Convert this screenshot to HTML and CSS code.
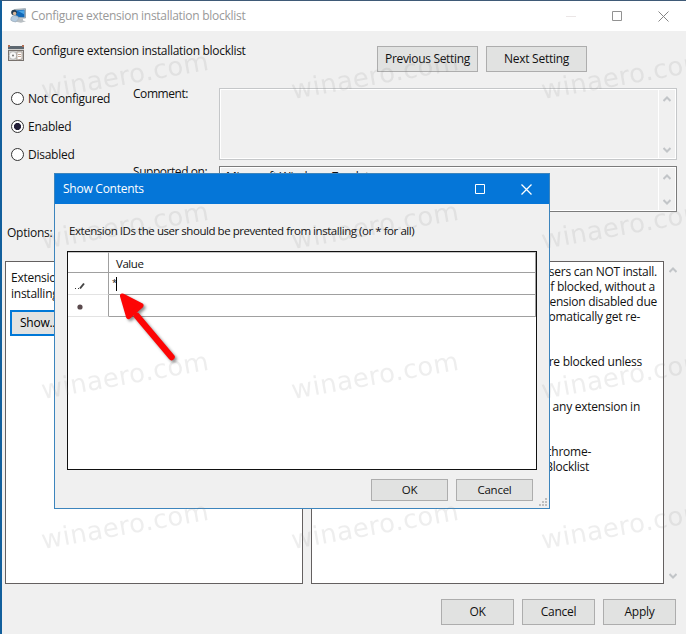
FILE: index.html
```html
<!DOCTYPE html>
<html lang="en">
<head>
<meta charset="utf-8">
<title>Configure extension installation blocklist</title>
<link rel="stylesheet" href="styles.css">
</head>
<body>
<main class="window">
  <header class="titlebar">
    <svg class="app-icon" width="18" height="16" viewBox="0 0 18 16">
      <path d="M4.500 1.500 15.500.700v9.300L4.500 10z" fill="#b9c4cc" stroke="#9aa6af"/>
      <path d="M5.500 2.500 14.500 1.700v7.500L5.500 9z" fill="#1168b8"/>
      <path d="M8 3l6-.700v4z" fill="#48a5e6"/>
      <path d="M9 10.500h4v2l3 .800-5 1.500-5-1z" fill="#b8bec2"/>
      <circle cx="4" cy="4.500" r="2.800" fill="#243b50"/>
      <circle cx="4.600" cy="5.500" r="1.700" fill="#d8b79a"/>
      <path d="M.800 12q0-4.500 4-4.500t4 3l-3 3.500-4-1z" fill="#b5cbdf" stroke="#8397a8" stroke-width=".6"/>
    </svg>
    <h1 class="caption">Configure extension installation blocklist</h1>
    <div class="controls">
      <svg width="11" height="11"><path d="M0 5.500h10" stroke="#ebe6e6"/></svg>
      <svg width="11" height="11"><path d="M.5.500h9v9h-9z" fill="none" stroke="#929292"/></svg>
      <svg width="11" height="11"><path d="M.5.500l10 10M10.500.500l-10 10" stroke="#858585"/></svg>
    </div>
  </header>

  <section class="heading">
    <svg class="policy-icon" width="16" height="17" viewBox="0 0 16 17">
      <path d="M0 1h16v15H0z" fill="#cfcfcd"/>
      <path d="M0 1h16v3H0z" fill="#5d6770"/>
      <path d="M0 0h2v2H0zM14 0h2v2h-2z" fill="#b06c51"/>
      <path d="M0 5.500h16M.5 5v11M15.500 5v11M0 15.500h15" stroke="#77716d" fill="none"/>
      <circle cx="5" cy="10.500" r="3.800" fill="#f8f8f8" stroke="#aaa" stroke-width=".7"/>
      <circle cx="5" cy="10.500" r="1" fill="#777"/>
      <path d="M9 7h5v7l-5 1z" fill="#fff" stroke="#96877b" stroke-width=".7"/>
      <path d="M10 9.500h3M10 11.500h3" stroke="#b38d75" stroke-width=".8"/>
    </svg>
    <h2 class="policy-name">Configure extension installation blocklist</h2>
    <div class="nav">
      <button class="btn prev">Previous Setting</button>
      <button class="btn next">Next Setting</button>
    </div>
  </section>

  <section class="state">
    <div class="radios">
      <label class="radio"><i></i><span>Not Configured</span></label>
      <label class="radio on"><i></i><span>Enabled</span></label>
      <label class="radio"><i></i><span>Disabled</span></label>
    </div>
    <div class="labels">
      <span>Comment:</span>
      <span>Supported on:</span>
    </div>
    <div class="fields">
      <div class="field comment">
        <div class="field-text"></div>
        <div class="scroll"><svg width="8" height="6"><path d="M.5 5 4 1.500 7.500 5"/></svg><svg width="8" height="6"><path d="M.5 1 4 4.500 7.500 1"/></svg></div>
      </div>
      <div class="field supported">
        <div class="field-text">Microsoft Windows 7 or later</div>
        <div class="scroll"><svg width="8" height="6"><path d="M.5 5 4 1.500 7.500 5"/></svg><svg width="8" height="6"><path d="M.5 1 4 4.500 7.500 1"/></svg></div>
      </div>
    </div>
  </section>

  <div class="options-label">Options:</div>

  <section class="panes">
    <div class="pane options">
      <p>Extension<br>installing</p>
      <button class="show">Show...</button>
    </div>
    <div class="pane help">
      <p class="w1">users can NOT install.</p>
      <p class="w2">if blocked, without a</p>
      <p class="w3">extension disabled due</p>
      <p class="w4">automatically get re-</p>
      <p class="w5">are blocked unless</p>
      <p class="w6">d any extension in</p>
      <p class="w7">chrome-</p>
      <p class="w8">Blocklist</p>
    </div>
    <div class="pane-scroll"><svg width="8" height="6"><path d="M.5 5 4 1.500 7.500 5"/></svg><svg width="8" height="6"><path d="M.5 1 4 4.500 7.500 1"/></svg></div>
  </section>

  <footer class="footer">
    <button class="btn">OK</button>
    <button class="btn">Cancel</button>
    <button class="btn">Apply</button>
  </footer>
</main>

<section class="dialog">
  <header class="dialog-title">
    <h2>Show Contents</h2>
    <svg width="11" height="11"><path d="M.5.500h9v9h-9z" fill="none" stroke="#fff"/></svg>
    <svg width="11" height="11"><path d="M.5.500l10 10M10.500.500l-10 10" stroke="#fff" stroke-width="1.300"/></svg>
  </header>
  <p class="prompt">Extension IDs the user should be prevented from installing (or * for all)</p>
  <div class="grid">
    <div class="cell head"></div><div class="cell head val">Value</div>
    <div class="cell mark"><svg width="12" height="9"><path d="M1 7h1v1H1zM4 7h1v1H4z" fill="#333"/><path d="M6 7.500 10 2.500" stroke="#444" stroke-width="2" fill="none"/></svg></div><div class="cell val edit"><span class="star">*</span><i class="caret"></i></div>
    <div class="cell mark"><svg width="12" height="9"><circle cx="6" cy="4" r="2.600" fill="#5a4a4d"/></svg></div><div class="cell val"></div>
  </div>
  <div class="dialog-actions">
    <button class="btn">OK</button>
    <button class="btn">Cancel</button>
  </div>
  <svg class="grip" width="8" height="8"><path d="M6 0h2v2H6zM3 3h2v2H3zM6 3h2v2H6zM0 6h2v2H0zM3 6h2v2H3zM6 6h2v2H6z" fill="#bfbfbf"/></svg>
</section>

<svg class="overlay" width="686" height="634" viewBox="0 0 686 634">
  <g class="watermark">
    <text transform="translate(43 99) rotate(-10)">winaero.com</text>
    <text transform="translate(293 99) rotate(-10)">winaero.com</text>
    <text transform="translate(543 99) rotate(-10)">winaero.com</text>
    <text transform="translate(43 249) rotate(-10)">winaero.com</text>
    <text transform="translate(293 249) rotate(-10)">winaero.com</text>
    <text transform="translate(543 249) rotate(-10)">winaero.com</text>
    <text transform="translate(43 399) rotate(-10)">winaero.com</text>
    <text transform="translate(293 399) rotate(-10)">winaero.com</text>
    <text transform="translate(543 399) rotate(-10)">winaero.com</text>
    <text transform="translate(43 549) rotate(-10)">winaero.com</text>
    <text transform="translate(293 549) rotate(-10)">winaero.com</text>
    <text transform="translate(543 549) rotate(-10)">winaero.com</text>
  </g>
  <g class="arrow">
    <path d="M137 316 171.500 357" stroke="#fd0505" stroke-width="6.500" stroke-linecap="round"/>
    <path d="M122.500 296 141 305.500 128.500 316.500z" fill="#fd0505" stroke="#fd0505" stroke-width="5" stroke-linejoin="round"/>
  </g>
</svg>
</body>
</html>
```
FILE: styles.css
```css
* { box-sizing: border-box; }
body {
  margin: 0;
  width: 686px;
  height: 634px;
  overflow: hidden;
  position: relative;
  background: #f0f0f0;
  color: #111;
  font: 12px/16px "Open Sans", "Noto Sans", sans-serif;
  letter-spacing: -0.25px;
}
h1, h2, p { margin: 0; font: inherit; white-space: nowrap; }
svg { display: block; flex: none; }
.window {
  height: 634px;
  border-left: 2px solid #125f9c;
  border-top: 1px solid #3f5a77;
}
.titlebar {
  height: 30px;
  display: flex;
  align-items: center;
  background: #fff;
  padding: 0 17px 0 8px;
}
.caption { margin-left: 3px; color: #999; letter-spacing: -0.28px; }
.controls { display: flex; gap: 35px; margin-left: auto; }
.heading { height: 50px; display: flex; padding: 14px 99px 0 6px; }
.policy-name { margin-left: 8px; margin-top: -2px; letter-spacing: -0.3px; }
.nav { margin-left: auto; display: flex; gap: 8px; margin-top: 1px; }
.btn {
  font: inherit;
  letter-spacing: inherit;
  color: #111;
  background: #e1e2e1;
  border: 1px solid #adadad;
  border-radius: 0;
  padding: 0;
  width: 73px;
  height: 26px;
  white-space: nowrap;
}
.nav .btn { width: 101px; }
.prev { letter-spacing: -0.32px; }
.state { display: flex; padding: 7px 9px 0 9px; height: 131px; }
.radios { width: 122px; display: flex; flex-direction: column; gap: 12px; padding-top: 2px; }
.radio { display: flex; align-items: center; gap: 4px; height: 16px; }
.radio span { padding-top: 1px; }
.radio i {
  width: 13px;
  height: 13px;
  border: 1px solid #333;
  border-radius: 50%;
  background: #fff;
}
.radio.on i { background: radial-gradient(circle, #231f38 3.2px, #fff 3.9px); }
.labels { width: 86px; display: flex; flex-direction: column; gap: 62px; margin-top: -2px; letter-spacing: -0.45px; }
.fields { flex: 1; display: flex; flex-direction: column; gap: 6px; }
.field { display: flex; border: 1px solid #c5c7c9; box-shadow: inset 0 0 0 1px #fff; height: 72px; }
.field.supported { border-color: #7b7b7b; height: 46px; }
.field-text { flex: 1; padding: 2px 6px; white-space: nowrap; }
.scroll {
  width: 18px;
  border-left: 1px solid #fff;
  display: flex;
  flex-direction: column;
  justify-content: space-between;
  align-items: center;
  padding: 7px 1px 6px 0;
}
.scroll path, .pane-scroll path { fill: none; stroke: #c2c5c8; stroke-width: 2; }
.options-label { height: 49px; padding: 13px 0 0 5px; }
.panes { height: 323px; display: flex; padding-left: 3px; }
.pane { background: #fff; border: 1px solid #646060; }
.options { width: 298px; padding: 8px 5px; }
.show {
  font: inherit;
  letter-spacing: inherit;
  width: 75px;
  height: 26px;
  margin: 8px 0 0 -1px;
  padding: 0 0 0 8px;
  text-align: left;
  background: #e1e2e1;
  border: 2px solid #0078d7;
}
.help {
  width: 353px;
  margin-left: 8px;
  display: grid;
  grid-template-rows: repeat(4, 15px) 45px 45px 45px 15px;
  align-items: end;
  align-content: start;
  padding-top: 2px;
  line-height: 15px;
}
.help p { justify-self: end; }
.help .w1, .help .w3 { margin-right: 6px; }
.help .w2 { margin-right: 8px; }
.help .w4 { margin-right: 23px; }
.help .w5 { margin-right: 21px; }
.help .w6 { margin-right: 23px; }
.help .w7 { margin-right: 72px; }
.help .w8 { margin-right: 74px; }
.pane-scroll { display: flex; flex-direction: column; justify-content: space-between; padding: 6px 0 5px 5px; }
.footer { display: flex; justify-content: flex-end; gap: 8px; padding: 15px 10px 0 0; }
.dialog {
  position: absolute;
  left: 54px;
  top: 173px;
  width: 496px;
  height: 336px;
  background: #f0f0f0;
  border: 1px solid #3d85bd;
}
.dialog-title {
  height: 30px;
  display: flex;
  align-items: center;
  gap: 35px;
  background: #0576d8;
  color: #fff;
  padding: 0 17px 0 8px;
}
.dialog-title h2 { margin-right: auto; }
.prompt { margin: 19px 0 0 14px; font-size: 11.5px; letter-spacing: -0.45px; }
.grid {
  margin: 12px 12px 0;
  height: 219px;
  border: 1px solid #111;
  background: #fff;
  display: grid;
  grid-template-columns: 41px 1fr;
  grid-template-rows: 21px 22px 22px;
}
.cell {
  border-right: 1px solid #a0a0a0;
  border-bottom: 1px solid #a0a0a0;
  padding-left: 7px;
  line-height: 22px;
  font-size: 11.5px;
  letter-spacing: -0.45px;
}
.cell.head { border-top: 1px solid #c8c8c8; }
.cell.mark { border-bottom-color: #e3e3e3; padding: 8px 0 0 6px; }
.edit { display: flex; padding-left: 3px; }
.star { width: 4px; font-size: 9px; line-height: 20px; }
.caret { width: 1px; height: 14px; margin-top: 4px; background: #000; }
.dialog-actions { display: flex; justify-content: flex-end; gap: 8px; padding: 9px 16px 0 0; }
.dialog-actions .btn { width: 77px; height: 22px; font-size: 11.5px; }
.grip { position: absolute; right: 2px; bottom: 2px; }
.overlay { position: absolute; left: 0; top: 0; pointer-events: none; }
.watermark {
  font: 26px "DejaVu Sans", sans-serif;
  letter-spacing: 0.3px;
  fill: #777;
  fill-opacity: 0.12;
  filter: drop-shadow(-1px -1px 0 rgba(255, 255, 255, 0.3));
}
.arrow { filter: drop-shadow(2px 2px 1.5px rgba(0, 0, 0, 0.45)); }
```
